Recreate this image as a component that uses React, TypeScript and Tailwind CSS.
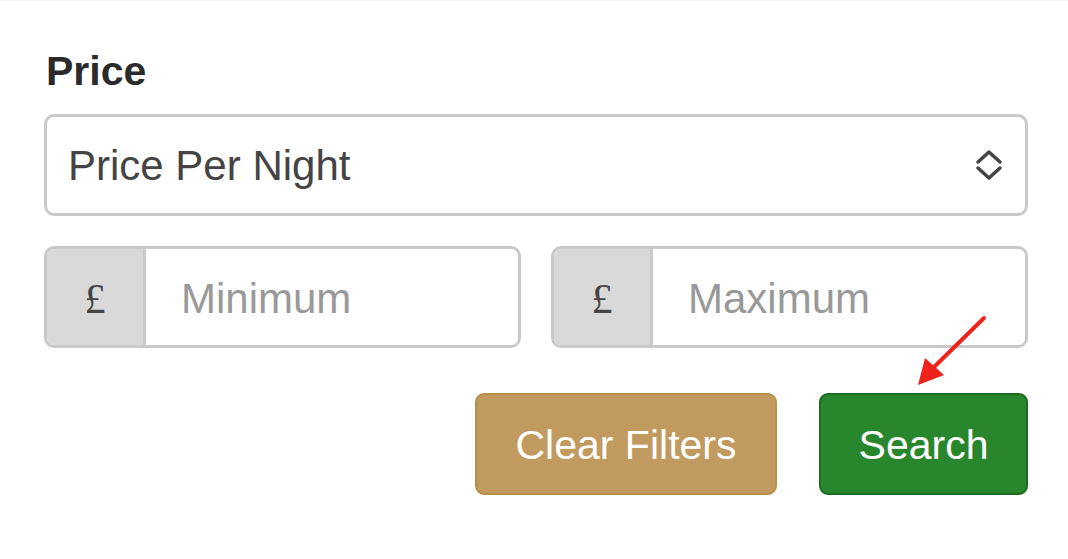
import React from 'react';

function Chevrons() {
  return (
    <svg width="28" height="34" viewBox="0 0 28 34" className="shrink-0">
      <path d="M3 14 L14 4 L25 14" fill="none" stroke="#444" strokeWidth="3.5" strokeLinecap="round" strokeLinejoin="round" />
      <path d="M3 20 L14 30 L25 20" fill="none" stroke="#444" strokeWidth="3.5" strokeLinecap="round" strokeLinejoin="round" />
    </svg>
  );
}

interface PriceInputProps {
  placeholder: string;
}

function PriceInput({ placeholder }: PriceInputProps) {
  return (
    <div className="flex flex-1 h-[102px] rounded-[10px] border-[3px] border-[#c9c9c9] overflow-hidden shadow-[inset_0_1px_2px_rgba(0,0,0,0.06)]">
      <div className="w-[99px] shrink-0 flex items-center justify-center bg-[#d9d9d9] border-r-[3px] border-[#c9c9c9] text-[42px] text-[#444] font-['Liberation_Serif',serif] pt-1">
        £
      </div>
      <input
        placeholder={placeholder}
        className="flex-1 min-w-0 pl-[35px] pt-[3px] text-[42px] text-[#444] placeholder:text-[#999] outline-none bg-white"
      />
    </div>
  );
}

export default function App() {
  return (
    <div className="relative w-[1068px] h-[559px] bg-white border-t border-[#f4f4f4] font-['Liberation_Sans',Arial,sans-serif] pl-[44px] pr-[40px] pt-[46px]">
      <h2 className="pl-[2px] text-[41px] font-bold text-[#2b2b2b] leading-[48px]">Price</h2>

      <div className="mt-[19px] h-[102px] flex items-center justify-between rounded-[10px] border-[3px] border-[#c9c9c9] pl-[21px] pr-[22px]">
        <span className="text-[42px] text-[#444]">Price Per Night</span>
        <Chevrons />
      </div>

      <div className="mt-[30px] flex gap-[30px]">
        <PriceInput placeholder="Minimum" />
        <PriceInput placeholder="Maximum" />
      </div>

      <div className="mt-[45px] flex justify-end gap-[42px]">
        <button className="h-[102px] w-[302px] pt-[3px] rounded-[9px] border-2 border-[#b8914f] bg-[#c19a60] text-white text-[41px]">
          Clear Filters
        </button>
        <button className="h-[102px] w-[209px] pt-[3px] rounded-[9px] border-2 border-[#1f6a22] bg-[#28862c] text-white text-[41px]">
          Search
        </button>
      </div>

      <svg className="absolute left-0 top-0 pointer-events-none" width="1068" height="559">
        <line x1="984" y1="317" x2="930" y2="370" stroke="#f0231c" strokeWidth="4" strokeLinecap="round" />
        <polygon points="918,384 925,357 944,374" fill="#f0231c" />
      </svg>
    </div>
  );
}
